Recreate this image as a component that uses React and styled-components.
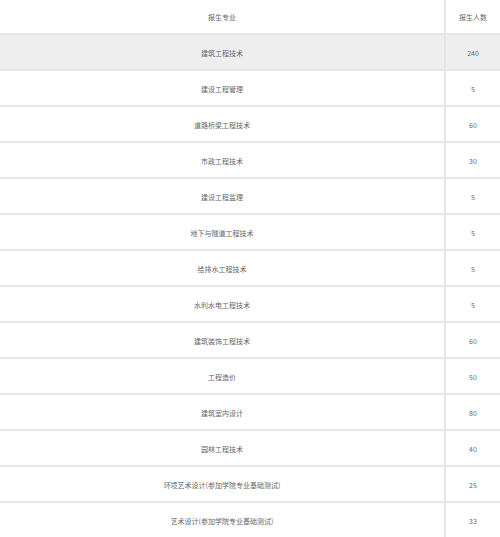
import React from "react";
import styled, { createGlobalStyle } from "styled-components";

const Global = createGlobalStyle`
  html, body { margin: 0; padding: 0; background: #ffffff; }
  * { box-sizing: border-box; }
`;

const Table = styled.div`
  width: 500px;
  display: grid;
  grid-template-columns: 446px 54px;
  font-family: "Noto Sans CJK SC", "Noto Sans", sans-serif;
  font-size: 7px;
  color: #666666;
`;

const Cell = styled.div`
  height: ${(p) => (p.$header ? 35 : 36)}px;
  display: flex;
  align-items: center;
  justify-content: center;
  background: ${(p) => (p.$shade ? "#eeeeee" : "#ffffff")};
  border-bottom: 2px solid #e6e6e6;
  border-right: ${(p) => (p.$left ? "2px solid #e6e6e6" : "none")};
  padding-top: 1px;
  white-space: nowrap;
`;

const rows = [
  ["建筑工程技术", "240"],
  ["建设工程管理", "5"],
  ["道路桥梁工程技术", "60"],
  ["市政工程技术", "30"],
  ["建设工程监理", "5"],
  ["地下与隧道工程技术", "5"],
  ["给排水工程技术", "5"],
  ["水利水电工程技术", "5"],
  ["建筑装饰工程技术", "60"],
  ["工程造价", "50"],
  ["建筑室内设计", "80"],
  ["园林工程技术", "40"],
  ["环境艺术设计(参加学院专业基础测试)", "25"],
  ["艺术设计(参加学院专业基础测试)", "33"],
];

export default function App() {
  return (
    <>
      <Global />
      <Table>
        <Cell $header $left>报生专业</Cell>
        <Cell $header>报生人数</Cell>
        {rows.map(([name, num], i) => (
          <React.Fragment key={name}>
            <Cell $left $shade={i === 0}>{name}</Cell>
            <Cell $shade={i === 0}>{num}</Cell>
          </React.Fragment>
        ))}
      </Table>
    </>
  );
}
